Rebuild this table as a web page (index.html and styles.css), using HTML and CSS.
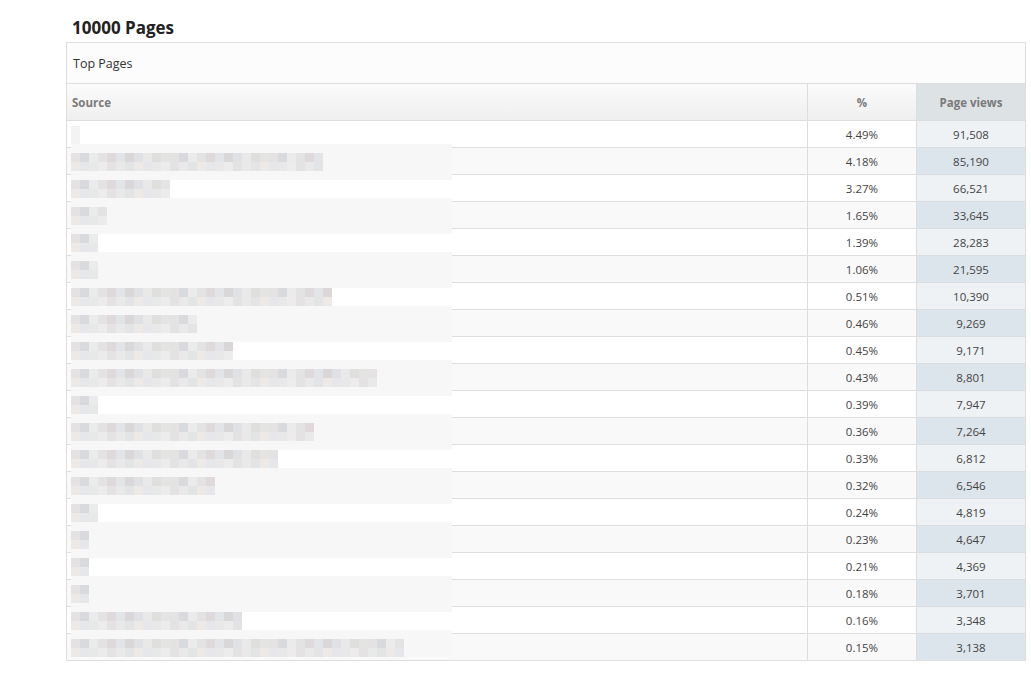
FILE: index.html
```html
<!DOCTYPE html>
<html>
<head>
    <title>10000 Pages</title>
    <link rel="stylesheet" href="styles.css">
</head>
<body>
    <div class="page">
        <h2 class="title">10000 Pages</h2>

        <div class="panel">
            <div class="panel-heading">Top Pages</div>

            <div class="table-wrap">
                <table class="stats">
                    <thead>
                        <tr>
                            <th class="col-source">Source</th>
                            <th class="col-pct">%</th>
                            <th class="col-views">Page views</th>
                        </tr>
                    </thead>
                    <tbody>
                        <tr><td></td><td>4.49%</td><td>91,508</td></tr>
                        <tr><td></td><td>4.18%</td><td>85,190</td></tr>
                        <tr><td></td><td>3.27%</td><td>66,521</td></tr>
                        <tr><td></td><td>1.65%</td><td>33,645</td></tr>
                        <tr><td></td><td>1.39%</td><td>28,283</td></tr>
                        <tr><td></td><td>1.06%</td><td>21,595</td></tr>
                        <tr><td></td><td>0.51%</td><td>10,390</td></tr>
                        <tr><td></td><td>0.46%</td><td>9,269</td></tr>
                        <tr><td></td><td>0.45%</td><td>9,171</td></tr>
                        <tr><td></td><td>0.43%</td><td>8,801</td></tr>
                        <tr><td></td><td>0.39%</td><td>7,947</td></tr>
                        <tr><td></td><td>0.36%</td><td>7,264</td></tr>
                        <tr><td></td><td>0.33%</td><td>6,812</td></tr>
                        <tr><td></td><td>0.32%</td><td>6,546</td></tr>
                        <tr><td></td><td>0.24%</td><td>4,819</td></tr>
                        <tr><td></td><td>0.23%</td><td>4,647</td></tr>
                        <tr><td></td><td>0.21%</td><td>4,369</td></tr>
                        <tr><td></td><td>0.18%</td><td>3,701</td></tr>
                        <tr><td></td><td>0.16%</td><td>3,348</td></tr>
                        <tr><td></td><td>0.15%</td><td>3,138</td></tr>
                    </tbody>
                </table>

                <!-- redacted source urls (pixelated) -->
                <div class="redact">
                    <div class="redact-row"><span class="mosaic faint" style="--n:1"></span></div>
                    <div class="redact-row"><span class="mosaic" style="--n:28"></span></div>
                    <div class="redact-row"><span class="mosaic" style="--n:11"></span></div>
                    <div class="redact-row"><span class="mosaic" style="--n:4"></span></div>
                    <div class="redact-row"><span class="mosaic" style="--n:3"></span></div>
                    <div class="redact-row"><span class="mosaic" style="--n:3"></span></div>
                    <div class="redact-row"><span class="mosaic" style="--n:29"></span></div>
                    <div class="redact-row"><span class="mosaic" style="--n:14"></span></div>
                    <div class="redact-row"><span class="mosaic" style="--n:18"></span></div>
                    <div class="redact-row"><span class="mosaic" style="--n:34"></span></div>
                    <div class="redact-row"><span class="mosaic" style="--n:3"></span></div>
                    <div class="redact-row"><span class="mosaic" style="--n:27"></span></div>
                    <div class="redact-row"><span class="mosaic" style="--n:23"></span></div>
                    <div class="redact-row"><span class="mosaic" style="--n:16"></span></div>
                    <div class="redact-row"><span class="mosaic" style="--n:3"></span></div>
                    <div class="redact-row"><span class="mosaic" style="--n:2"></span></div>
                    <div class="redact-row"><span class="mosaic" style="--n:2"></span></div>
                    <div class="redact-row"><span class="mosaic" style="--n:2"></span></div>
                    <div class="redact-row"><span class="mosaic" style="--n:19"></span></div>
                    <div class="redact-row"><span class="mosaic" style="--n:37"></span></div>
                </div>
            </div>
        </div>
    </div>
</body>
</html>
```

FILE: styles.css
```css
:root {
    --border: #dddddd;
    --text: #444444;
    --header-text: #7a7a7a;
    --stripe: #f9f9f9;
    --views: #eef2f5;
    --views-stripe: #dde5ec;
    --views-head: #dde2e5;
}

* {
    margin: 0;
    padding: 0;
    box-sizing: border-box;
}

body {
    font-family: 'Open Sans', 'Liberation Sans', sans-serif;
    background-color: #ffffff;
    color: var(--text);
}

.page {
    padding-left: 66px;
    width: 1026px;
}

.title {
    font-size: 17px;
    font-weight: 700;
    line-height: 24px;
    color: #222222;
    margin: 16px 0 2px 6px;
}

.panel {
    border: 1px solid var(--border);
}

.panel-heading {
    height: 41px;
    padding: 1px 6px 0;
    font-size: 12.5px;
    line-height: 40px;
    color: #333333;
    background-color: #fcfcfc;
    border-bottom: 1px solid var(--border);
}

.table-wrap {
    position: relative;
}

.stats {
    width: 100%;
    border-collapse: separate;
    border-spacing: 0;
    table-layout: fixed;
    font-size: 11.5px;
}

.stats th {
    height: 37px;
    padding: 2px 5px 0;
    font-weight: 700;
    line-height: 16px;
    color: var(--header-text);
    background: linear-gradient(#fbfbfb, #efefef);
    border-bottom: 1px solid var(--border);
}

.stats th + th,
.stats td + td {
    border-left: 1px solid var(--border);
}

.col-source {
    width: 740px;
    text-align: left;
}

.col-pct {
    width: 109px;
    text-align: center;
}

.stats th.col-views {
    background: var(--views-head);
    text-align: center;
}

.stats td {
    height: 27px;
    padding: 2px 5px 0;
    line-height: 16px;
    text-align: center;
    border-bottom: 1px solid var(--border);
}

.stats tbody tr:last-child td {
    height: 26px;
    border-bottom: none;
}

.stats tbody tr:nth-child(even) td {
    background-color: var(--stripe);
}

.stats td:last-child {
    background-color: var(--views);
}

.stats tbody tr:nth-child(even) td:last-child {
    background-color: var(--views-stripe);
}

/* pixelated overlay over the source column */
.redact {
    position: absolute;
    top: 37px;
    left: 4px;
    width: 381px;
    padding-top: 5px;
    background: linear-gradient(#ffffff 0 5px, #f7f7f7 5px);
}

.redact-row {
    height: 18px;
    margin-bottom: 9px;
    background-color: #ffffff;
}

.redact-row:nth-child(even) {
    background-color: #f7f7f7;
}

.redact-row:last-child {
    margin-bottom: 0;
}

.mosaic {
    display: block;
    width: calc(var(--n) * 9px);
    height: 18px;
    background:
        repeating-linear-gradient(90deg,
            #e4e2e2 0 9px, #d9dadd 9px 18px, #ebebeb 18px 27px, #e2e3e2 27px 36px,
            #e0d9db 36px 45px, #e3e4e7 45px 54px, #dad7d9 54px 63px, #e0e1e4 63px 72px,
            #e9e9e9 72px 81px, #dfe0dd 81px 90px, #e4e4e2 90px 99px)
            0 0 / 100% 9px no-repeat,
        repeating-linear-gradient(90deg,
            #ece9e7 0 9px, #e6e7ea 9px 18px, #e8e8e8 18px 27px, #ececec 27px 36px,
            #e4e2e3 36px 45px, #e9e9ea 45px 54px, #e3e4e6 54px 63px)
            0 9px / 100% 9px no-repeat;
}

.mosaic.faint {
    background: #f3f3f3;
}
```
